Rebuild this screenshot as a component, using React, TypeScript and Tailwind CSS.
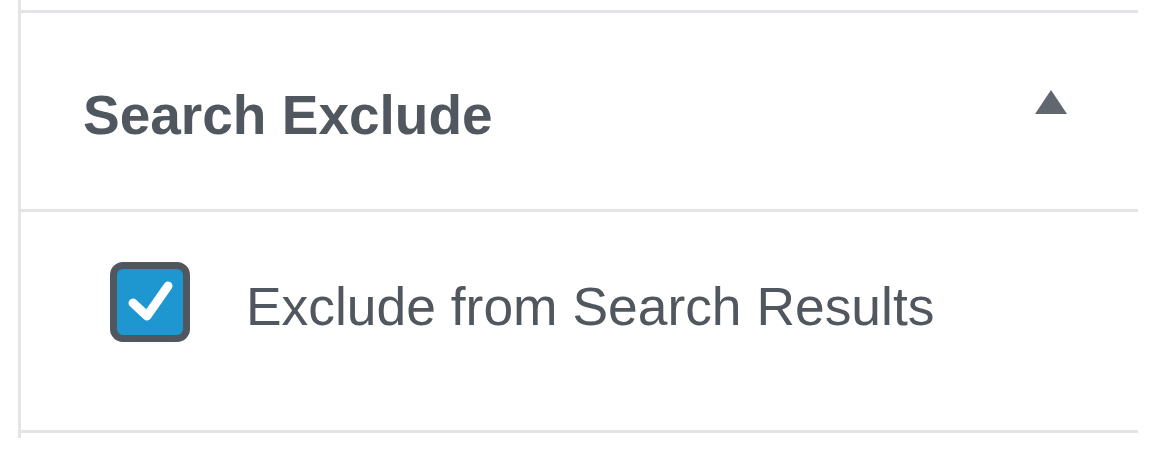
export default function App() {
  return (
    <div className="h-[456px] w-[1172px] bg-white font-['Liberation_Sans',Arial,sans-serif]">
      <div className="ml-[18px] w-[1120px] border-l-[3px] border-[#e2e4e7] pt-[10px] pb-[5px]">
        <div className="border-y-[3px] border-[#e2e4e7]">
          <div className="flex h-[196px] items-center justify-between pl-[62px] pr-[71px]">
            <h2 className="mt-[8px] text-[55px] font-bold leading-none text-[#50575e]">
              Search Exclude
            </h2>
            <svg width="32" height="24" viewBox="0 0 32 24" className="mb-[18px]">
              <path d="M16 0 L32 24 L0 24 Z" fill="#60676e" />
            </svg>
          </div>
          <div className="border-t-[3px] border-[#e2e4e7]">
            <div className="flex h-[218px] items-start pl-[89px] pt-[50px]">
              <span className="flex h-[80px] w-[80px] items-center justify-center rounded-[13px] border-[7px] border-[#50575e] bg-[#1e96d0]">
                <svg width="66" height="66" viewBox="0 0 66 66">
                  <path
                    d="M16 34 L30 47 L51 17"
                    fill="none"
                    stroke="white"
                    strokeWidth="9"
                    strokeLinecap="round"
                    strokeLinejoin="round"
                  />
                </svg>
              </span>
              <span className="ml-[56px] mt-[18px] text-[53.4px] leading-none text-[#50575e]">
                Exclude from Search Results
              </span>
            </div>
          </div>
        </div>
      </div>
    </div>
  );
}
